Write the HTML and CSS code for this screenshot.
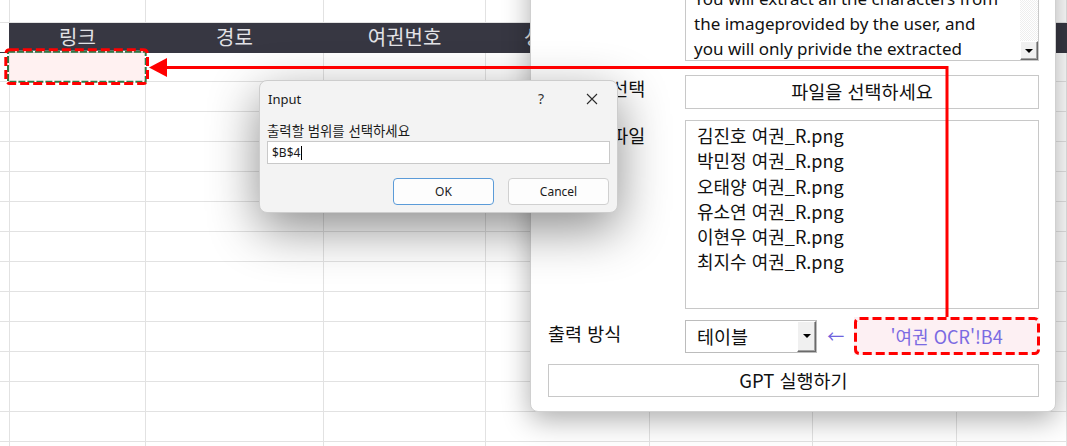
FILE: index.html
```html
<!DOCTYPE html>
<html lang="ko">
<head>
<meta charset="utf-8">
<title>여권 OCR</title>
<link rel="stylesheet" href="styles.css">
</head>
<body>
<div class="screen">
  <div class="sheet">
    <span></span><span></span><span></span><span></span><span></span><span></span><span></span><span></span>
    <span class="corner"></span><span class="h">링크</span><span class="h">경로</span><span class="h">여권번호</span><span class="h">성명(영문)</span><span class="h">생년월일</span><span class="h">발급일</span><span class="h">만료일</span>
    <span></span><span class="sel"></span><span></span><span></span><span></span><span></span><span></span><span></span>
    <span></span><span></span><span></span><span></span><span></span><span></span><span></span><span></span>
    <span></span><span></span><span></span><span></span><span></span><span></span><span></span><span></span>
    <span></span><span></span><span></span><span></span><span></span><span></span><span></span><span></span>
    <span></span><span></span><span></span><span></span><span></span><span></span><span></span><span></span>
    <span></span><span></span><span></span><span></span><span></span><span></span><span></span><span></span>
    <span></span><span></span><span></span><span></span><span></span><span></span><span></span><span></span>
    <span></span><span></span><span></span><span></span><span></span><span></span><span></span><span></span>
    <span></span><span></span><span></span><span></span><span></span><span></span><span></span><span></span>
    <span></span><span></span><span></span><span></span><span></span><span></span><span></span><span></span>
    <span></span><span></span><span></span><span></span><span></span><span></span><span></span><span></span>
    <span></span><span></span><span></span><span></span><span></span><span></span><span></span><span></span>
    <span></span><span></span><span></span><span></span><span></span><span></span><span></span><span></span>
    <span></span><span></span><span></span><span></span><span></span><span></span><span></span><span></span>
  </div>

  <div class="panel">
    <div class="field f-prompt">
      <div class="label">프롬프트</div>
      <div class="prompt">
        <div class="prompt-text">
          <div>You are an OCR assistant.</div>
          <div>You will extract all the characters from</div>
          <div>the imageprovided by the user, and</div>
          <div>you will only privide the extracted</div>
        </div>
        <div class="scroll"><span class="scroll-btn"><i class="tri"></i></span></div>
      </div>
    </div>
    <div class="field f-file">
      <div class="label">이미지 선택</div>
      <div class="file-btn">파일을 선택하세요</div>
    </div>
    <div class="field f-list">
      <div class="label">선택된 파일</div>
      <div class="list">
        <div>김진호 여권_R.png</div>
        <div>박민정 여권_R.png</div>
        <div>오태양 여권_R.png</div>
        <div>유소연 여권_R.png</div>
        <div>이현우 여권_R.png</div>
        <div>최지수 여권_R.png</div>
      </div>
    </div>
    <div class="field f-out">
      <div class="label">출력 방식</div>
      <div class="out-controls">
        <div class="select"><span class="select-val">테이블</span><span class="drop"><i class="tri"></i></span></div>
        <span class="arrow">←</span>
        <div class="target">
          <span>'여권 OCR'!B4</span>
          <svg class="target-dash" width="186" height="38" viewBox="0 0 186 38"><rect x="1.5" y="1.5" width="183" height="35" rx="4" fill="none" stroke="#ff0000" stroke-width="3" stroke-dasharray="9 4"/></svg>
        </div>
      </div>
    </div>
    <div class="gpt">GPT 실행하기</div>
  </div>

  <div class="dialog">
    <div class="dlg-title">
      <span class="dlg-name">Input</span>
      <span class="dlg-help">?</span>
      <span class="dlg-close"><svg width="12" height="12" viewBox="0 0 12 12"><path d="M1 1 L11 11 M11 1 L1 11" stroke="#2b2b2b" stroke-width="1.1" fill="none"/></svg></span>
    </div>
    <div class="dlg-label">출력할 범위를 선택하세요</div>
    <div class="dlg-input">$B$4<span class="caret"></span></div>
    <div class="dlg-buttons">
      <span class="btn btn-ok">OK</span>
      <span class="btn">Cancel</span>
    </div>
  </div>

  <svg class="annot" width="1067" height="446" viewBox="0 0 1067 446">
    <rect x="8" y="51.7" width="137.7" height="30" fill="none" stroke="#ffffff" stroke-width="2"/>
    <rect x="8" y="51.7" width="137.7" height="30" fill="none" stroke="#2e7a45" stroke-width="2" stroke-dasharray="7 2"/>
    <rect x="5.8" y="49.8" width="141.7" height="33.7" rx="4" fill="none" stroke="#ff0000" stroke-width="3" stroke-dasharray="9 4"/>
    <path d="M947 317 V67.5 H164" fill="none" stroke="#ff0000" stroke-width="3"/>
    <polygon points="149,67.5 167,58 167,77" fill="#ff0000"/>
  </svg>
</div>
</body>
</html>
```
FILE: styles.css
```css
* { box-sizing: border-box; }
html, body { margin: 0; padding: 0; }
body {
  width: 1067px;
  height: 446px;
  overflow: hidden;
  background: #ffffff;
  font-family: "Noto Sans CJK KR", "Noto Sans", sans-serif;
}
.screen {
  position: relative;
  width: 1067px;
  height: 446px;
  overflow: hidden;
}

/* spreadsheet */
.sheet {
  display: grid;
  grid-template-columns: 10px 136px 178px 162px 164px 163px 144px 110px;
  grid-template-rows: 23px 30px 29px;
  grid-auto-rows: 30px;
}
.sheet > span {
  display: block;
  border-right: 1px solid #e2e2e2;
  border-bottom: 1px solid #e2e2e2;
}
.sheet > .corner { border-bottom-color: #373742; border-right-color: #373742; }
.sheet > .h {
  background: #373742;
  border-color: #373742;
  color: #e2e2e6;
  font-size: 20px;
  line-height: 28px;
  text-align: center;
  white-space: nowrap;
  overflow: hidden;
}
.sheet > .sel { background: #fff1f1; }

/* side panel */
.panel {
  position: absolute;
  left: 530px;
  top: -80px;
  width: 526px;
  height: 492px;
  background: #ffffff;
  border: 1px solid #d0d0d0;
  border-radius: 8px;
  box-shadow: 0 8px 28px rgba(0, 0, 0, 0.32);
  padding: 19px 16px 14px 17px;
  display: flex;
  flex-direction: column;
  font-size: 18.5px;
  color: #111111;
}
.field {
  display: grid;
  grid-template-columns: 137px 354px;
}
.label {
  padding-top: 2px;
  line-height: 26px;
  white-space: nowrap;
}
.f-file .label, .f-list .label { text-indent: 7px; padding-top: 0; }
.f-list .label { padding-top: 2px; }
.f-prompt { height: 121px; }
.prompt {
  border: 1px solid #c8c8c8;
  display: flex;
  overflow: hidden;
}
.prompt-text {
  flex: 1;
  padding: 20px 0 0 8px;
  font-family: "Noto Sans", "Noto Sans CJK KR", sans-serif;
  font-size: 17px;
  line-height: 25px;
  white-space: nowrap;
  overflow: hidden;
}
.scroll {
  width: 18px;
  display: flex;
  flex-direction: column;
  justify-content: flex-end;
  background: repeating-conic-gradient(#eeeeee 0 25%, #ffffff 0 50%) 0 0 / 2px 2px;
}
.scroll-btn, .drop {
  display: flex;
  align-items: center;
  justify-content: center;
  background: #f0f0f0;
  border-style: solid;
  border-width: 1px;
  border-color: #ffffff #6a6a6a #6a6a6a #ffffff;
  box-shadow: inset -1px -1px 0 #a3a3a3;
}
.scroll-btn { height: 19px; }
.tri {
  display: block;
  width: 0;
  height: 0;
  border-left: 4px solid transparent;
  border-right: 4px solid transparent;
  border-top: 4px solid #000000;
}

.f-file { margin-top: 14px; height: 34px; }
.file-btn {
  border: 1px solid #c8c8c8;
  text-align: center;
  line-height: 31px;
}

.f-list { margin-top: 11px; height: 189px; }
.list {
  border: 1px solid #c8c8c8;
  padding: 2px 0 0 11px;
  font-size: 18px;
  line-height: 25.3px;
}

.f-out { margin-top: 8px; height: 38px; }
.f-out .label { padding-top: 3px; }
.out-controls {
  display: flex;
  align-items: center;
  white-space: nowrap;
}
.select {
  width: 133px;
  height: 33px;
  border: 1px solid #bcbcbc;
  display: flex;
}
.select-val {
  flex: 1;
  padding-left: 11px;
  line-height: 30px;
}
.drop { width: 19px; }
.arrow {
  margin-left: 10px;
  width: 17px;
  color: #6f62dd;
  font-size: 17px;
  line-height: 20px;
}
.target {
  position: relative;
  margin-left: 10px;
  width: 186px;
  height: 38px;
  background: #fdf0f3;
  color: #7b6be2;
  display: flex;
  align-items: center;
  justify-content: center;
  font-size: 18px;
}
.target-dash {
  position: absolute;
  left: 0;
  top: 0;
}

.gpt {
  margin-top: 9px;
  height: 33px;
  border: 1px solid #c8c8c8;
  text-align: center;
  line-height: 30px;
}

/* input dialog */
.dialog {
  position: absolute;
  left: 259px;
  top: 80px;
  width: 359px;
  height: 133px;
  background: #f3f3f3;
  border: 1px solid #cdcdcd;
  border-radius: 8px;
  box-shadow: 0 16px 50px rgba(0, 0, 0, 0.45);
  padding: 0 7px;
  font-family: "Noto Sans", "Noto Sans CJK KR", sans-serif;
  font-size: 13px;
  color: #1a1a1a;
}
.dlg-title {
  height: 35px;
  display: flex;
  align-items: center;
}
.dlg-name { flex: 1; padding-left: 1px; }
.dlg-help {
  width: 28px;
  margin-right: 19px;
  text-align: center;
  font-size: 14px;
  color: #333333;
}
.dlg-close {
  width: 36px;
  display: flex;
  justify-content: center;
}
.dlg-label {
  margin-top: 4px;
  line-height: 20px;
  font-family: "Noto Sans CJK KR", sans-serif;
  font-size: 13.4px;
}
.dlg-input {
  margin-top: 1px;
  height: 23px;
  background: #ffffff;
  border: 1px solid #c9c9c9;
  padding-left: 4px;
  font-size: 12px;
  line-height: 21px;
  display: flex;
  align-items: center;
}
.caret {
  display: inline-block;
  width: 1px;
  height: 14px;
  background: #000000;
  margin-left: 1px;
}
.dlg-buttons {
  margin-top: 14px;
  display: flex;
  justify-content: flex-end;
  gap: 14px;
  padding-right: 1px;
}
.btn {
  width: 101px;
  height: 27px;
  border: 1px solid #d0d0d0;
  border-radius: 4px;
  background: #fdfdfd;
  text-align: center;
  line-height: 25px;
  font-size: 12px;
}
.btn-ok { border-color: #5b9bd8; }

/* annotation overlay */
.annot {
  position: absolute;
  left: 0;
  top: 0;
  pointer-events: none;
}
```
